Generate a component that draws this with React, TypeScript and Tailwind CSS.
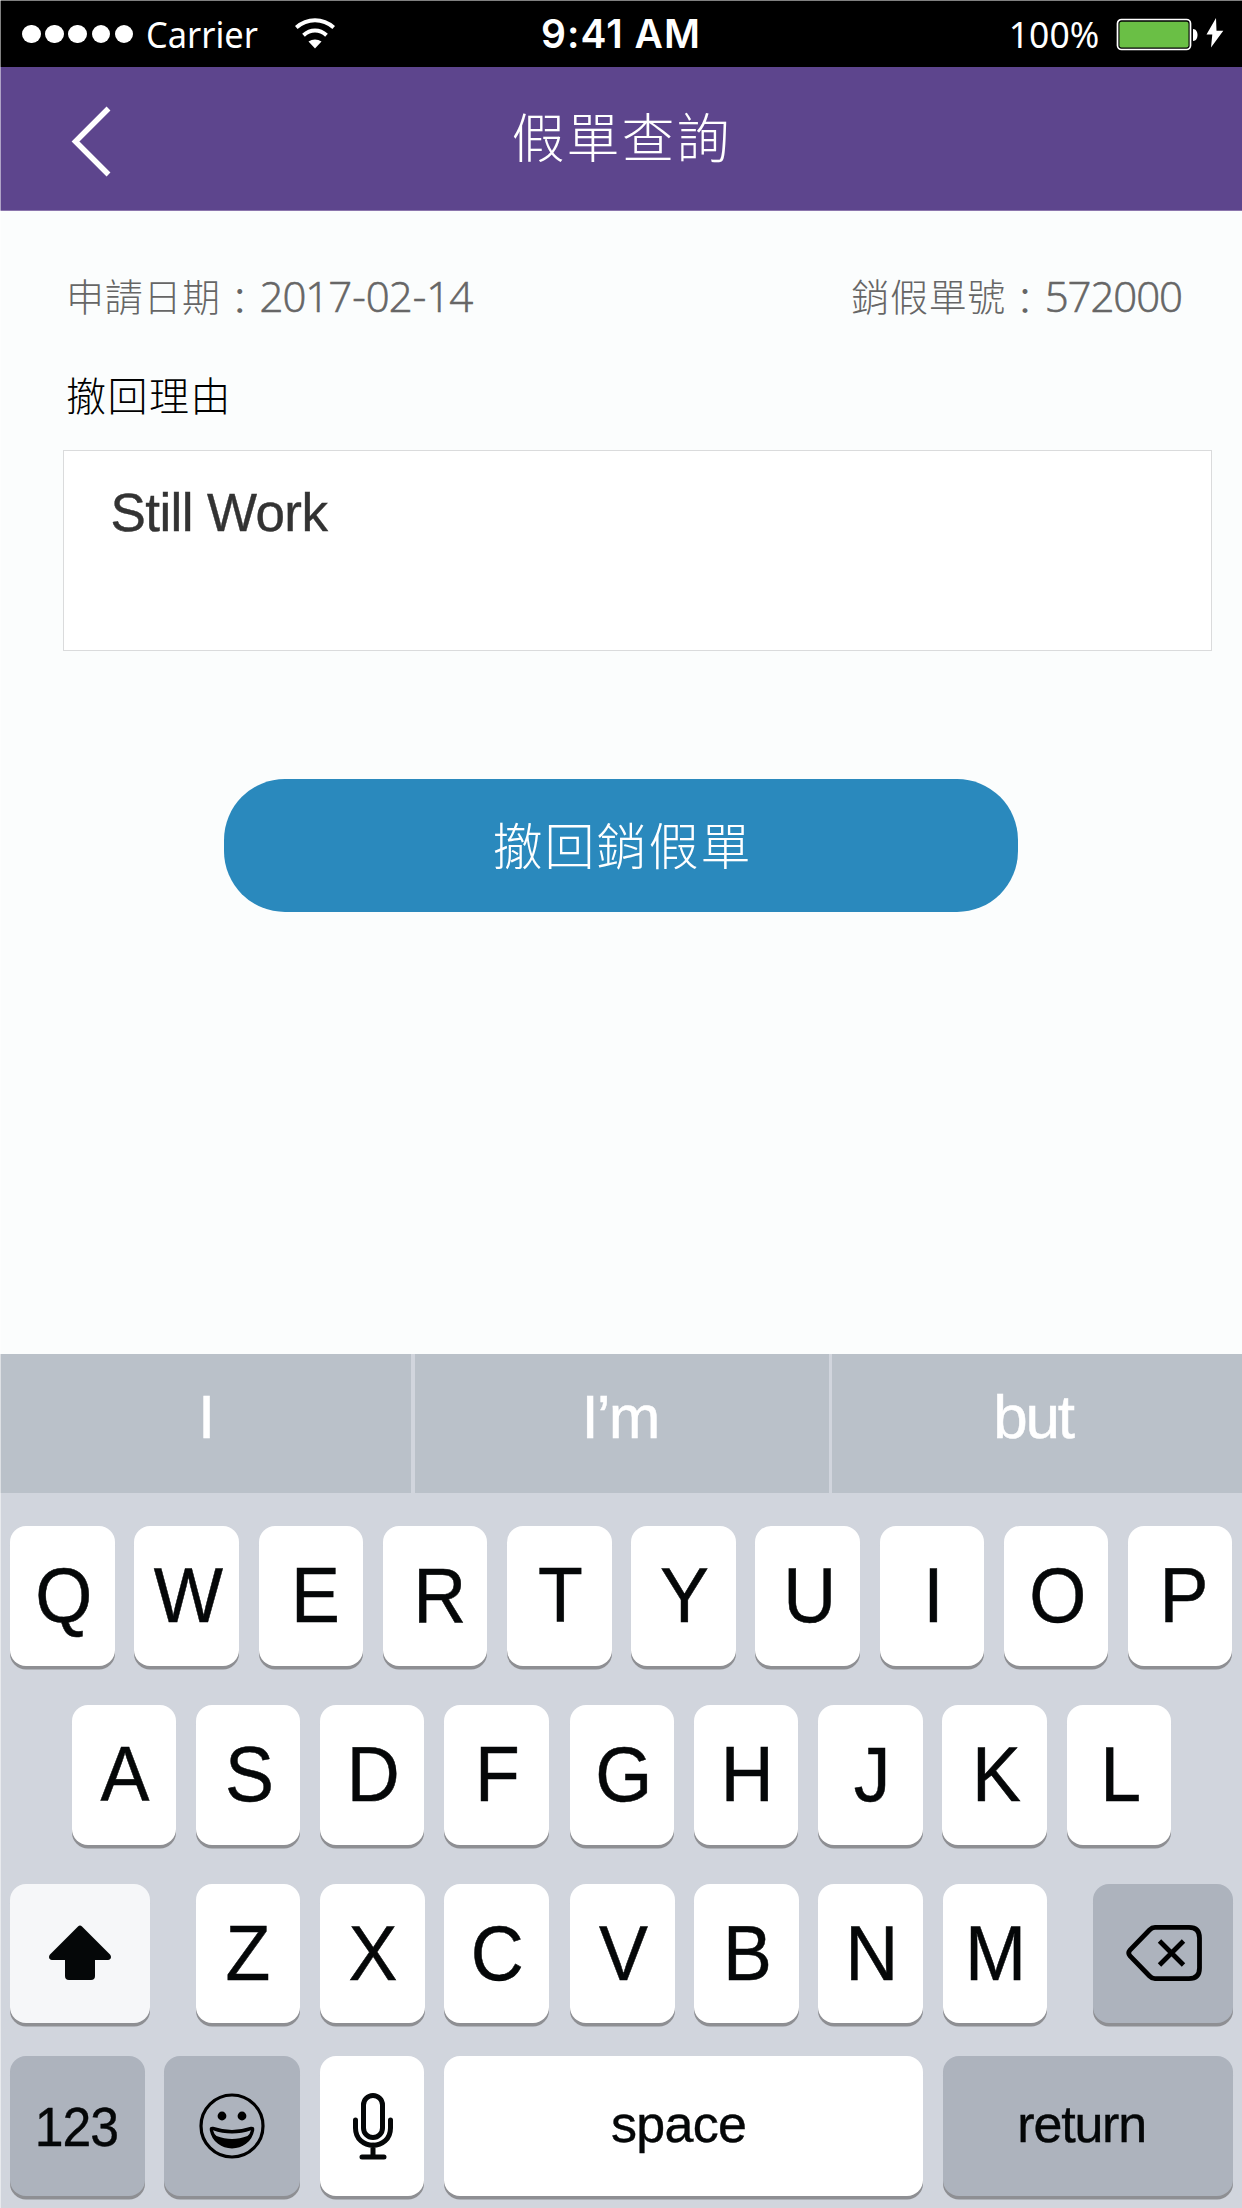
import React from "react";

const sans = "font-['Liberation_Sans',Arial,sans-serif]";
const cjk = "font-['Noto_Sans_CJK_TC',sans-serif]";
const digits =
  "inline-block translate-y-px font-['Open_Sans',sans-serif] text-[42px] tracking-[-1.1px] [-webkit-text-stroke:0.6px_#666]";

const nudge: Record<string, string> = {
  E: "translate-x-[4.5px]",
  R: "translate-x-[4.5px]",
  P: "translate-x-[4px]",
  L: "translate-x-[2px]",
  Z: "translate-x-0",
  X: "translate-x-px",
  D: "translate-x-px",
  C: "translate-x-px",
  H: "translate-x-px",
  M: "translate-x-px",
  A: "translate-x-px",
};

function Key({ className = "", children }: { className?: string; children: React.ReactNode }) {
  return (
    <button
      type="button"
      className={`flex h-[139.5px] shrink-0 items-center justify-center rounded-[16px] shadow-[0_3.5px_0_#8e8f93] ${className}`}
    >
      {children}
    </button>
  );
}

function Letter({ children, className = "" }: { children: string; className?: string }) {
  return (
    <Key className={`w-[104.5px] bg-white ${className}`}>
      <span
        className={`block scale-x-[0.94] text-[78px] leading-[139px] text-[#050708] [-webkit-text-stroke:0.5px_#050708] ${
          nudge[children] ?? "translate-x-[1.5px]"
        }`}
      >
        {children}
      </span>
    </Key>
  );
}

function Wifi() {
  return (
    <svg className="h-[32px] w-[40px]" viewBox="0 0 40 32" fill="none" stroke="#fff" strokeWidth="4">
      <path d="M1.3 9.5C12.3-.2 27.7-.2 38.7 9.5" />
      <path d="M8.5 17.3C15.5 11 24.5 11 31.5 17.3" />
      <path d="M13.5 23.5C17.5 20.7 22.5 20.7 26.5 23.5L20 30.5Z" fill="#fff" stroke="none" />
    </svg>
  );
}

function Battery() {
  return (
    <svg className="ml-[17px] h-[34px] w-[108px]" viewBox="0 0 108 34">
      <rect x="1.5" y="2.5" width="73" height="30" rx="4" fill="none" stroke="#fff" strokeWidth="1.7" />
      <rect x="3.5" y="4.7" width="69" height="25.8" rx="2" fill="#6abf45" />
      <path d="M77 12c6 0 6 12 0 12Z" fill="#fff" />
      <path d="M100 1L90.5 17.5H96.3L95 30.5L107.3 13.8H100.5Z" fill="#fff" />
    </svg>
  );
}

function Colon() {
  return <span className="inline-block translate-y-[4px]">：</span>;
}

export default function App() {
  return (
    <div className={`relative flex h-[2208px] w-[1242px] flex-col overflow-hidden bg-[#fbfdfd] ${sans}`}>
      <div className="absolute inset-y-0 left-0 w-px bg-white/50" />
      <div className="flex h-[67px] shrink-0 items-center border-t border-[#808080] bg-black text-white">
        <div className="flex flex-1 items-center pl-[22px]">
          <div className="flex gap-[4.5px]">
            {[0, 1, 2, 3, 4].map((i) => (
              <span key={i} className="h-[18.7px] w-[18.7px] rounded-full bg-white" />
            ))}
          </div>
          <span className="ml-[13px] w-[149px] shrink-0 origin-left scale-x-[0.93] font-['Noto_Sans',sans-serif] text-[37px] leading-[60px] whitespace-nowrap">
            Carrier
          </span>
          <Wifi />
        </div>
        <span className="-translate-x-[2px] font-['Inter',sans-serif] text-[39px] leading-[60px] font-semibold tracking-[1px]">
          9:41 AM
        </span>
        <div className="flex flex-1 items-center justify-end pr-[18px]">
          <span className="origin-right scale-x-[0.96] font-['Noto_Sans',sans-serif] text-[37px] leading-[60px]">100%</span>
          <Battery />
        </div>
      </div>

      <header className="grid h-[144px] shrink-0 grid-cols-3 items-center border-b border-[#8b76ad] bg-[#5d458d] text-white">
        <svg className="mt-[7px] ml-[70px] h-[72px] w-[42px]" viewBox="0 0 42 72" fill="none" stroke="#fff" strokeWidth="5.5">
          <path d="M38.5 2.5L5.5 35.5L38.5 68.5" />
        </svg>
        <h1 className={`pb-[8px] pl-px text-center text-[53px] leading-[80px] font-light tracking-[2px] ${cjk}`}>假單查詢</h1>
      </header>

      <main className="flex flex-1 flex-col pr-[30px] pl-[63px]">
        <div
          className={`mt-[54px] flex h-[60px] justify-between pr-[30px] pl-[3px] text-[38px] leading-[60px] font-light tracking-[0.7px] text-[#666] ${cjk}`}
        >
          <p>
            申請日期
            <Colon />
            <span className={digits}>
              2017<span className="mx-[1.2px]">-</span>02<span className="mx-[1.2px]">-</span>14
            </span>
          </p>
          <p>
            銷假單號
            <Colon />
            <span className={digits}>572000</span>
          </p>
        </div>
        <h2 className={`mt-[39px] h-[60px] pl-[3px] text-[40px] leading-[60px] font-light tracking-[1.5px] text-black ${cjk}`}>
          撤回理由
        </h2>
        <div className="mt-[26px] h-[201px] border border-[#dadbdc] bg-white pt-[30px] pl-[46.5px] text-[53px] leading-[64px] tracking-[-0.6px] text-[#333] [-webkit-text-stroke:0.4px_#333]">
          Still Work
        </div>
        <button
          type="button"
          className={`mt-[128px] ml-[161px] h-[133px] w-[794px] rounded-[61px] bg-[#2a89bd] pb-[4px] pl-[3px] text-[50px] font-light tracking-[2px] text-white ${cjk}`}
        >
          撤回銷假單
        </button>
      </main>

      <section className="flex h-[854px] shrink-0 flex-col bg-[#d1d5dd]">
        <div className="grid h-[139px] grid-cols-[411px_414px_1fr] gap-[3.5px] text-center text-[62px] leading-[126px] text-white [-webkit-text-stroke:0.5px_#fff]">
          <span className="bg-[#bac1c9] pl-[2px]">I</span>
          <span className="bg-[#bac1c9] pr-[3px] tracking-[-1.8px]">I’m</span>
          <span className="bg-[#bac1c9] pr-[8px] tracking-[-2.2px]">but</span>
        </div>
        <div className="mt-[33px] flex gap-[19.7px] pl-[10.3px]">
          {"QWERTYUIOP".split("").map((c) => (
            <Letter key={c}>{c}</Letter>
          ))}
        </div>
        <div className="mt-[39.5px] flex gap-[19.7px] pl-[71.5px]">
          {"ASDFGHJKL".split("").map((c) => (
            <Letter key={c} className={c === "G" ? "ml-[1.5px]" : ""}>
              {c}
            </Letter>
          ))}
        </div>
        <div className="mt-[39px] flex justify-between pr-[9.3px] pl-[10.3px]">
          <Key className="w-[139.5px] bg-[#f6f7f9]">
            <svg className="h-[56px] w-[64px]" viewBox="0 0 64 56" fill="#050708">
              <path d="M30 1.6Q32-.4 34 1.6L62 29.5C64 32 62.8 35 60 35H47V51Q47 55 43 55H21Q17 55 17 51V35H4C1.2 35 0 32 2 29.5Z" />
            </svg>
          </Key>
          <div className="flex gap-[19.7px]">
            {"ZXCVBNM".split("").map((c) => (
              <Letter key={c} className={c === "V" ? "ml-[1.5px]" : ""}>
                {c}
              </Letter>
            ))}
          </div>
          <Key className="w-[139.5px] bg-[#adb3bd]">
            <svg className="ml-[2px] h-[58px] w-[76px]" viewBox="0 0 76 58" fill="none" stroke="#000" strokeWidth="4.8">
              <path d="M29 3.4H63Q73.5 3.4 73.5 14V44Q73.5 54.6 63 54.6H29Q26 54.6 23.5 52L4 32Q1.5 29 4 26L23.5 6Q26 3.4 29 3.4Z" />
              <path d="M33.5 17L57.5 41M57.5 17L33.5 41" />
            </svg>
          </Key>
        </div>
        <div className="mt-[33px] flex gap-[19.7px] pl-[10.3px] text-[#050708]">
          <Key className="w-[134.3px] bg-[#adb3bd]">
            <span className="-translate-x-px translate-y-px scale-x-[0.94] text-[55px] tracking-[-1px] [-webkit-text-stroke:0.4px_#050708]">
              123
            </span>
          </Key>
          <Key className="w-[136px] bg-[#adb3bd]">
            <svg className="h-[66px] w-[66px]" viewBox="0 0 66 66" fill="none" stroke="#000">
              <circle cx="33" cy="33" r="31" strokeWidth="3.2" />
              <circle cx="23" cy="23" r="4.4" fill="#000" stroke="none" />
              <circle cx="43" cy="23" r="4.4" fill="#000" stroke="none" />
              <path
                d="M14 34.5C26 38.5 40 38.5 52 34.5Q55 34 54.5 37C50 60.5 16 60.5 11.5 37Q11 34 14 34.5Z"
                fill="#000"
                strokeWidth="1.5"
              />
              <path d="M14 37.2C26 41.6 40 41.6 52 37.2Q51 41 48.5 43C38 47 28 47 17.5 43Q15 41 14 37.2Z" fill="#adb3bd" stroke="none" />
            </svg>
          </Key>
          <Key className="w-[104.5px] bg-white">
            <svg className="ml-px h-[68px] w-[42px]" viewBox="0 0 42 68" fill="none" stroke="#050708" strokeWidth="5" strokeLinecap="round">
              <rect x="11.5" y="3.5" width="19" height="42" rx="9.5" />
              <path d="M3.5 28V36C3.5 59 38.5 59 38.5 36V28M21 53V65M10 65H32" />
            </svg>
          </Key>
          <Key className="w-[478.8px] bg-white">
            <span className="-translate-x-[5px] -translate-y-[2px] text-[52px] tracking-[-0.7px] [-webkit-text-stroke:0.4px_#050708]">
              space
            </span>
          </Key>
          <Key className="w-[290px] bg-[#adb3bd]">
            <span className="-translate-x-[6px] -translate-y-[2px] text-[52px] tracking-[-1.2px] [-webkit-text-stroke:0.4px_#050708]">
              return
            </span>
          </Key>
        </div>
      </section>
    </div>
  );
}
